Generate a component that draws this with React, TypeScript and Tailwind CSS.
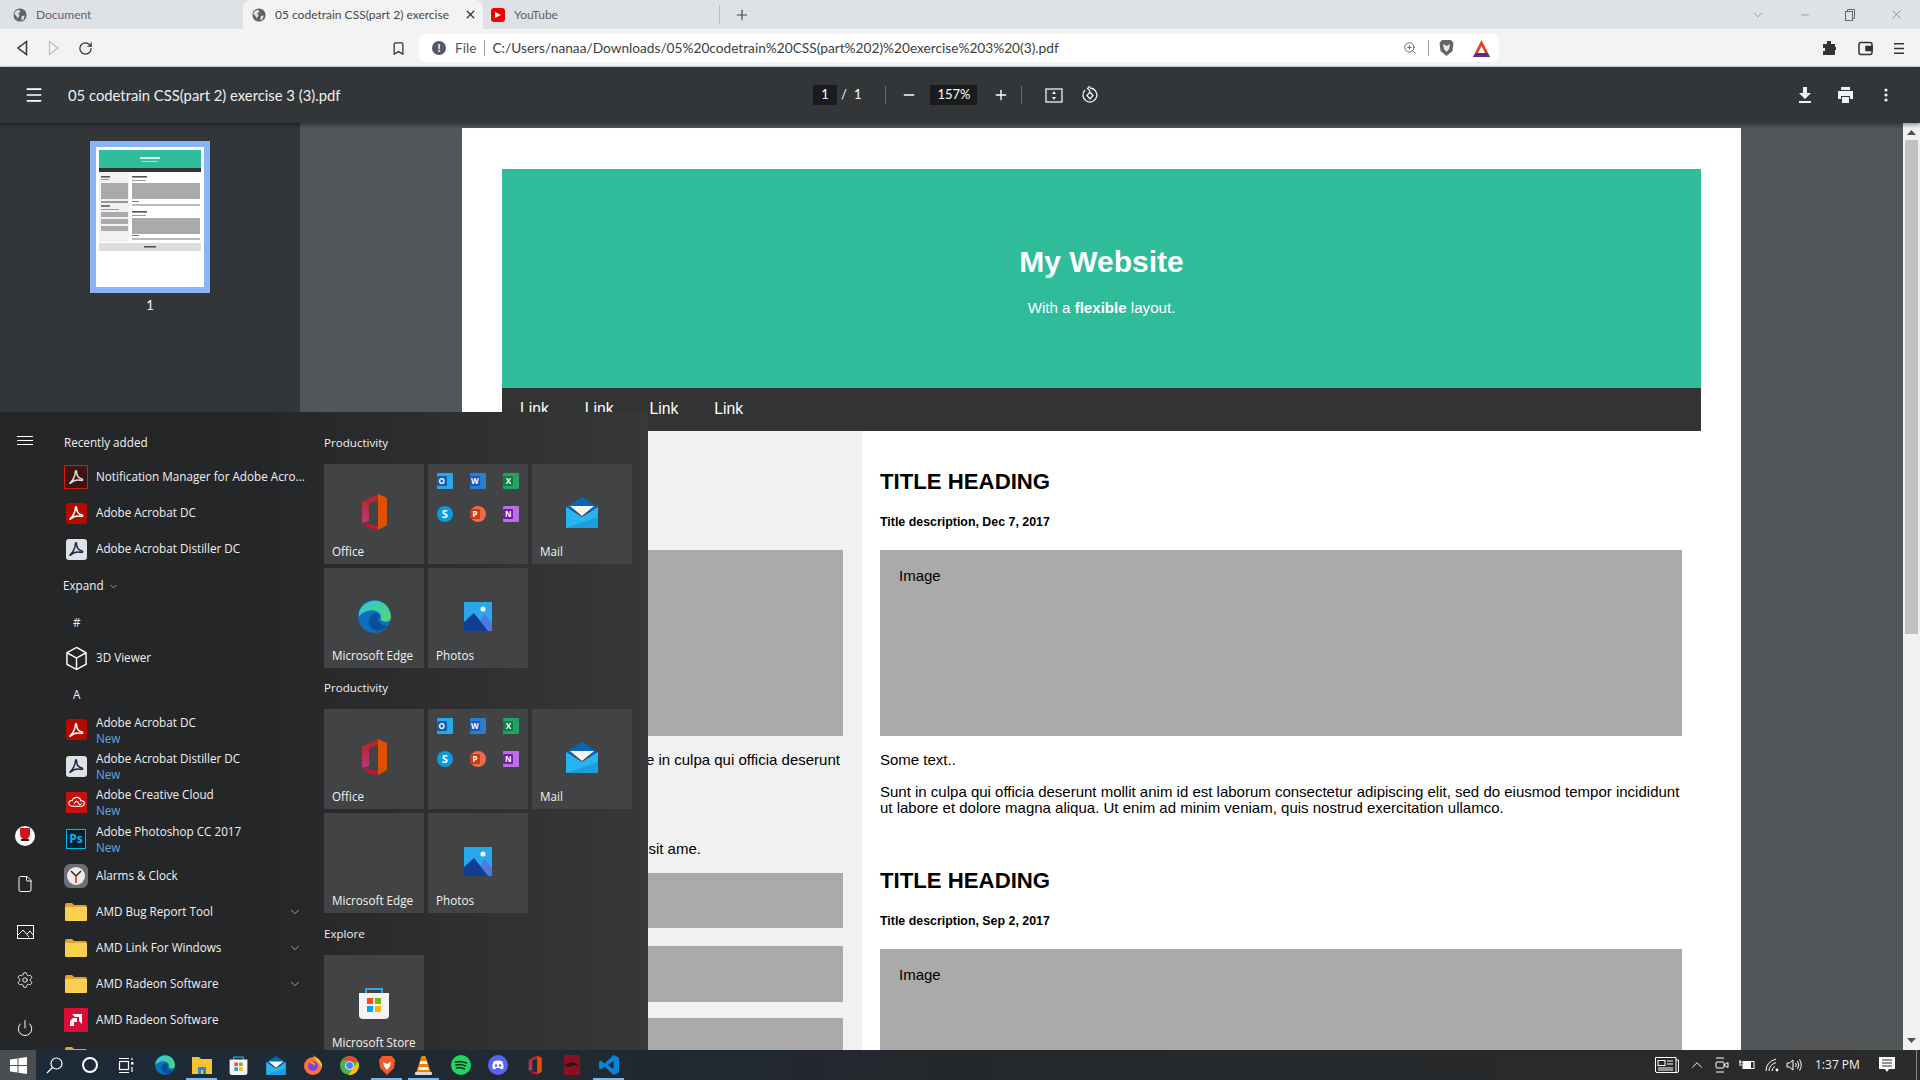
import React from "react";
import { ChevronDown, Plus, X, Minus, Menu, Bookmark, RotateCw, ZoomIn, ChevronUp, Settings, Power, File } from "lucide-react";

const SANS = "font-['Lato',sans-serif]";
const WIN = "font-['Open_Sans',sans-serif]";
const ARIAL = "font-['Liberation_Sans',Arial,sans-serif]";

const Globe = () => (
  <svg width="14" height="14" viewBox="0 0 16 16">
    <circle cx="8" cy="8" r="7.5" fill="#5f6368" />
    <path d="M3 3.5 L7 2 L8.5 4.5 L6 6 L7.5 8 L5.5 12 L3.5 8.5 L1.5 7 Z M10 9 L13.5 8.5 L12 13 L9.5 14 Z" fill="#dee1e6" />
  </svg>
);

const AcrobatGlyph = ({ color = "#fff" }: { color?: string }) => (
  <svg width="16" height="16" viewBox="0 0 24 24" fill="none" stroke={color} strokeWidth="2.2">
    <path d="M3 21 C7 18 11 10 11 5 C11 2 13 2 13 5 C13 10 16 14 21 15 C23 16 22 17.5 19 17 C14 16 8 17 4 21 C3 22 2.5 21.5 3 21 Z" />
  </svg>
);

const Folder = () => (
  <svg width="24" height="20" viewBox="0 0 24 20">
    <path d="M1 3 Q1 1 3 1 H8 L10 3 H21 Q23 3 23 5 V7 H1 Z" fill="#e0a526" />
    <path d="M1 5 H22 Q23 5 23 6 V18 Q23 19 22 19 H2 Q1 19 1 18 Z" fill="#fbcf4f" />
  </svg>
);

const AppIcon = ({ kind }: { kind: string }) => {
  if (kind === "notify")
    return (
      <span className="w-6 h-6 flex items-center justify-center border-[1.5px] border-[#d81e06] bg-[#3a1512]">
        <AcrobatGlyph color="#e8d8d8" />
      </span>
    );
  if (kind === "acrobat")
    return (
      <span className="w-[21px] h-[21px] rounded-[3px] flex items-center justify-center bg-[#b30b00]">
        <AcrobatGlyph />
      </span>
    );
  if (kind === "distiller")
    return (
      <span className="w-[21px] h-[21px] rounded-[3px] flex items-center justify-center bg-[#dfe1e6]">
        <AcrobatGlyph color="#1e2a44" />
      </span>
    );
  if (kind === "cube")
    return (
      <svg width="23" height="25" viewBox="0 0 24 26" fill="none" stroke="#fff" strokeWidth="1.5">
        <path d="M12 1.5 L22 7 V19 L12 24.5 L2 19 V7 Z M2 7 L12 12.5 L22 7 M12 12.5 V24.5" />
      </svg>
    );
  if (kind === "cc")
    return (
      <span className="w-[21px] h-[21px] flex items-center justify-center bg-[#c5110f]">
        <svg width="17" height="12" viewBox="0 0 24 16" fill="none" stroke="#fff" strokeWidth="1.6">
          <path d="M7 14 C-1 14 0 5 6 6 C8 0 17 0 18 6 C25 6 25 14 17 14 Z M9 10 C11 6 13 6 15 10 C16 12 18 12 19 10" />
        </svg>
      </span>
    );
  if (kind === "ps")
    return (
      <span className={`w-[20px] h-[20px] flex items-center justify-center border border-[#00b7f0] bg-[#00202e] text-[#00b7f0] text-[12px] font-bold ${WIN}`}>
        Ps
      </span>
    );
  if (kind === "clock")
    return (
      <span className="w-6 h-6 rounded-md bg-[#6d6f73] flex items-center justify-center">
        <svg width="20" height="20" viewBox="0 0 20 20">
          <circle cx="10" cy="10" r="9" fill="#ececec" />
          <path d="M10 10 L5 5 M10 10 L15 5" stroke="#333" strokeWidth="1.6" />
          <path d="M10 10 V17" stroke="#d9391e" strokeWidth="1.6" />
        </svg>
      </span>
    );
  if (kind === "folder") return <Folder />;
  if (kind === "amd")
    return (
      <span className="w-6 h-6 flex items-center justify-center bg-[#dc0a35]">
        <svg width="14" height="14" viewBox="0 0 14 14" fill="#fff">
          <path d="M3 1 H13 V11 L10 8 V4 H6 Z M1 13 V8 L4 5 H8 V9 H5 V13 Z" />
        </svg>
      </span>
    );
  return null;
};

const recent = [
  { kind: "notify", name: "Notification Manager for Adobe Acro..." },
  { kind: "acrobat", name: "Adobe Acrobat DC" },
  { kind: "distiller", name: "Adobe Acrobat Distiller DC" },
];

const newApps = [
  { kind: "acrobat", name: "Adobe Acrobat DC", h: "h-[37px]" },
  { kind: "distiller", name: "Adobe Acrobat Distiller DC", h: "h-[36px]" },
  { kind: "cc", name: "Adobe Creative Cloud", h: "h-[36px]" },
  { kind: "ps", name: "Adobe Photoshop CC 2017", h: "h-[38px]" },
];

const lower = [
  { kind: "clock", name: "Alarms & Clock" },
  { kind: "folder", name: "AMD Bug Report Tool", more: true },
  { kind: "folder", name: "AMD Link For Windows", more: true },
  { kind: "folder", name: "AMD Radeon Software", more: true },
  { kind: "amd", name: "AMD Radeon Software" },
  { kind: "folder", name: "" },
];

const AppRow = ({ kind, name, more }: { kind: string; name: string; more?: boolean }) => (
  <div className="h-9 flex items-center shrink-0">
    <span className="w-7 flex justify-center shrink-0">
      <AppIcon kind={kind} />
    </span>
    <span className="ml-[6px] flex-1 whitespace-nowrap text-[11.7px] text-[#f1f1f1]">{name}</span>
    {more && <ChevronDown size={14} strokeWidth={1.2} className="text-[#cfcfcf]" />}
  </div>
);

const OfficeIcon = ({ size = 38 }: { size?: number }) => (
  <svg width={size} height={size} viewBox="0 0 32 38">
    <defs>
      <linearGradient id="officeA" x1="0" y1="0" x2="0" y2="1">
        <stop offset="0" stopColor="#b5241c" />
        <stop offset="1" stopColor="#b73a78" />
      </linearGradient>
    </defs>
    <path d="M20 1 L29 5 V32 L20 37 Z" fill="#e04e00" />
    <path d="M4 9 L20 1 V7 L11 10 V28 L4 30 Z" fill="url(#officeA)" />
    <path d="M4 30 L20 33 V37 L11 35 Z" fill="#d01030" />
  </svg>
);

const EdgeIcon = ({ size = 33 }: { size?: number }) => (
  <svg width={size} height={size} viewBox="0 0 32 32">
    <defs>
      <linearGradient id="edgeA" x1="0" y1="0" x2="1" y2="1">
        <stop offset="0" stopColor="#2fc6d8" />
        <stop offset="1" stopColor="#53d76b" />
      </linearGradient>
    </defs>
    <circle cx="16" cy="16" r="16" fill="#0c6fc0" />
    <path d="M1 12 C4 2 14 0 20 1 C28 3 32 10 32 17 C32 22 24 22 22 19 C24 13 18 9 12 10 C7 11 3 13 1 16 Z" fill="url(#edgeA)" />
    <path d="M12 26 C8 20 12 13 17 13 C20 13 21 15 20 17 C18 20 22 25 28 25 C24 31 16 32 12 26 Z" fill="#0a4f97" />
  </svg>
);

const MailIcon = ({ w = 32, h = 31 }: { w?: number; h?: number }) => (
  <svg width={w} height={h} viewBox="0 0 32 31">
    <path d="M0 10 L16 0 L32 10 V14 H0 Z" fill="#0a64b4" />
    <path d="M4 9 H28 L16 19 Z" fill="#f4f4f4" />
    <path d="M0 10 L16 20 L32 10 V31 H0 Z" fill="#28b4ee" />
    <path d="M0 31 L32 20 V31 Z" fill="#1793d5" opacity="0.7" />
  </svg>
);

const PhotosIcon = () => (
  <svg width="28" height="29" viewBox="0 0 28 29">
    <rect width="28" height="29" fill="#28a8ea" />
    <circle cx="19" cy="7" r="2.6" fill="#e8f4fc" />
    <path d="M12 29 L20 12 L28 21 V29 Z" fill="#4f78e0" />
    <path d="M0 29 V20 L10 11 L24 29 Z" fill="#103f91" />
  </svg>
);

const StoreIcon = ({ size = 32 }: { size?: number }) => (
  <svg width={size} height={size} viewBox="0 0 32 32">
    <path d="M8 7 V2 H24 V7" fill="none" stroke="#28a8ea" strokeWidth="2" />
    <path d="M1 6 H31 V28 Q31 32 27 32 H5 Q1 32 1 28 Z" fill="#f4f4f4" />
    <rect x="9" y="11" width="6" height="6" fill="#f25022" />
    <rect x="17" y="11" width="6" height="6" fill="#7fba00" />
    <rect x="9" y="19" width="6" height="6" fill="#00a4ef" />
    <rect x="17" y="19" width="6" height="6" fill="#ffb900" />
  </svg>
);

const miniApps = [
  { l: "O", page: "bg-[#28a8ea]", box: "top-[3px] w-[10px] h-[10px] bg-[#0f5fb0] text-[8px]", round: false },
  { l: "W", page: "bg-[#2b7cd3]", box: "top-[3px] w-[10px] h-[10px] bg-[#185abd] text-[8px]", round: false },
  { l: "X", page: "bg-[#21a366]", box: "top-[3px] w-[10px] h-[10px] bg-[#107c41] text-[8px]", round: false },
  { l: "S", page: "bg-[#0a9be0]", box: "top-0 w-4 h-4 text-[11px]", round: true },
  { l: "P", page: "bg-[#ed6c47]", box: "top-[3px] w-[10px] h-[10px] bg-[#c43e1c] text-[8px]", round: true },
  { l: "N", page: "bg-[#ba6ee0]", box: "top-[3px] w-[10px] h-[10px] bg-[#7719aa] text-[8px]", round: false },
];

const Tile = ({ label, children }: { label?: string; children?: React.ReactNode }) => (
  <div className="relative w-[100px] h-[100px] bg-[#424344] flex items-center justify-center shrink-0">
    {children}
    {label && (
      <span className="absolute left-2 bottom-[3px] text-[11.7px] text-[#f3f3f3] whitespace-nowrap">{label}</span>
    )}
  </div>
);

const MiniTile = () => (
  <div className="w-[100px] h-[100px] bg-[#424344] shrink-0 grid grid-cols-3 grid-rows-[33px_33px]">
    {miniApps.map((a) => (
      <span key={a.l} className="flex items-center justify-center">
        <span className={`relative w-4 h-4 ${a.page} ${a.round ? "rounded-full" : "rounded-[1px]"}`}>
          <span className={`absolute left-0 ${a.box} text-white font-bold leading-none flex items-center justify-center rounded-[1px]`}>
            {a.l}
          </span>
        </span>
      </span>
    ))}
  </div>
);

const Productivity = ({ edgeIcon }: { edgeIcon: boolean }) => (
  <>
    <div className="h-[34px] shrink-0 flex items-center text-[11.6px] text-[#f1f1f1]">Productivity</div>
    <div className="grid grid-cols-[100px_100px_100px] gap-1 mt-1 shrink-0">
      <Tile label="Office">
        <span className="-mt-1">
          <OfficeIcon />
        </span>
      </Tile>
      <MiniTile />
      <Tile label="Mail">
        <span className="-mt-1">
          <MailIcon />
        </span>
      </Tile>
      <Tile label="Microsoft Edge">
        {edgeIcon && (
          <span className="-mt-1">
            <EdgeIcon />
          </span>
        )}
      </Tile>
      <Tile label="Photos">
        <span className="-mt-1">
          <PhotosIcon />
        </span>
      </Tile>
    </div>
  </>
);

const RailSlot = ({ children }: { children: React.ReactNode }) => (
  <span className="h-[18px] flex items-center justify-center">{children}</span>
);

const StartMenu = () => (
  <div className={`absolute left-0 top-[412px] bottom-[30px] w-[648px] overflow-hidden flex bg-linear-to-r from-[#252628] from-40% to-[#383838] ${WIN}`}>
    <div className="w-[50px] shrink-0 flex flex-col items-center pt-6 pb-[13px]">
      <svg width="16" height="9" viewBox="0 0 16 9" stroke="#fff" strokeWidth="1">
        <path d="M0 0.5 H16 M0 4.5 H16 M0 8.5 H16" />
      </svg>
      <div className="mt-auto flex flex-col items-center gap-[30px]">
        <RailSlot>
          <span className="w-5 h-5 shrink-0 rounded-full bg-white flex items-start justify-center pt-[2px]">
            <svg width="12" height="13" viewBox="0 0 12 13">
              <path d="M1 0 H11 V6 Q11 10 6 12 Q1 10 1 6 Z" fill="#d3121d" />
              <rect x="2" y="11" width="8" height="2" fill="#222" />
            </svg>
          </span>
        </RailSlot>
        <RailSlot>
          <File size={18} strokeWidth={1.3} className="text-white" />
        </RailSlot>
        <RailSlot>
          <svg width="17" height="14" viewBox="0 0 17 14" fill="none" stroke="#fff" strokeWidth="1">
            <rect x="0.5" y="0.5" width="16" height="13" />
            <path d="M1 10 L6 5 L12 12 M10 9 L13 6 L16 10" />
          </svg>
        </RailSlot>
        <RailSlot>
          <Settings size={18} strokeWidth={1.2} className="text-white" />
        </RailSlot>
        <RailSlot>
          <Power size={18} strokeWidth={1.3} className="text-white" />
        </RailSlot>
      </div>
    </div>

    <div className="w-[240px] shrink-0 ml-3 flex flex-col pt-[15px] text-[#f1f1f1]">
      <div className="h-8 shrink-0 flex items-center pl-[2px] text-[11.7px]">Recently added</div>
      {recent.map((r) => (
        <AppRow key={r.name} {...r} />
      ))}
      <div className="h-[38px] shrink-0 flex items-center gap-1 pl-[1px] text-[11.7px]">
        Expand <ChevronDown size={11} strokeWidth={1.2} />
      </div>
      <div className="h-[35px] shrink-0 flex items-center pl-[11px] text-[11.7px]">#</div>
      <AppRow kind="cube" name="3D Viewer" />
      <div className="h-[35px] shrink-0 flex items-center pl-[11px] pt-[2px] text-[11.7px]">A</div>
      {newApps.map((a) => (
        <div key={a.name} className={`${a.h} flex items-center shrink-0`}>
          <span className="w-7 flex justify-center shrink-0">
            <AppIcon kind={a.kind} />
          </span>
          <span className="ml-[6px] flex flex-col text-[11.7px] leading-[16px] whitespace-nowrap">
            {a.name}
            <span className="text-[#5fa8e0]">New</span>
          </span>
        </div>
      ))}
      {lower.map((r, i) => (
        <AppRow key={i} {...r} />
      ))}
    </div>

    <div className="ml-[22px] flex flex-col pt-[14px]">
      <Productivity edgeIcon />
      <div className="mt-[3px] flex flex-col shrink-0">
        <Productivity edgeIcon={false} />
      </div>
      <div className="h-[34px] mt-1 shrink-0 flex items-center text-[11.6px] text-[#f1f1f1]">Explore</div>
      <div className="mt-1 shrink-0">
        <Tile label="Microsoft Store">
          <span className="-mt-1">
            <StoreIcon />
          </span>
        </Tile>
      </div>
    </div>
  </div>
);

const taskbarIcons: { key: string; node: React.ReactNode; running?: boolean }[] = [
  { key: "edge", node: <EdgeIcon size={20} /> },
  {
    key: "files",
    running: true,
    node: (
      <svg width="22" height="19" viewBox="0 0 22 19">
        <path d="M1 1 H8 L10 3 H21 V18 H1 Z" fill="#f4c430" />
        <path d="M7 18 V11 H15 V18 H12 V14 H10 V18 Z" fill="#2b88d8" />
      </svg>
    ),
  },
  { key: "store", node: <StoreIcon size={19} /> },
  { key: "mail", node: <MailIcon w={20} h={19} /> },
  {
    key: "firefox",
    node: (
      <svg width="20" height="20" viewBox="0 0 20 20">
        <circle cx="10" cy="11" r="9" fill="#ff7139" />
        <path d="M10 0 C14 3 19 6 19 11 C19 15 17 8 14 7 Z" fill="#ffbd2e" />
        <circle cx="10" cy="11" r="5" fill="#7542e5" />
        <path d="M6 7 C9 5 13 8 12 11 C10 9 8 9 6 7 Z" fill="#ff9a3c" />
      </svg>
    ),
  },
  {
    key: "chrome",
    node: (
      <svg width="19" height="19" viewBox="0 0 20 20">
        <circle cx="10" cy="10" r="10" fill="#4caf50" />
        <path d="M10 0 A10 10 0 0 1 19 6 H10 L3 3.5 A10 10 0 0 1 10 0 Z" fill="#ea4335" />
        <path d="M19 6 A10 10 0 0 1 9 20 L14 12 Z" fill="#fbbc05" />
        <circle cx="10" cy="10" r="4.6" fill="#fff" />
        <circle cx="10" cy="10" r="3.6" fill="#4285f4" />
      </svg>
    ),
  },
  {
    key: "brave",
    running: true,
    node: (
      <svg width="18" height="21" viewBox="0 0 18 21">
        <path d="M4 1 H14 L17 5 L16 13 L9 20 L2 13 L1 5 Z" fill="#f25a29" />
        <path d="M5 7 L9 9 L13 7 L12 11 L9 15 L6 11 Z" fill="#fff" />
      </svg>
    ),
  },
  {
    key: "vlc",
    running: true,
    node: (
      <svg width="19" height="21" viewBox="0 0 19 21">
        <path d="M7.5 1 H11.5 L17 18 H2 Z" fill="#f08000" />
        <path d="M6.5 6 H12.5 L13.5 9 H5.5 Z M5 12 H14 L15 15 H4 Z" fill="#f4f4f4" />
        <rect x="1" y="17" width="17" height="3" rx="1" fill="#d9d9d9" />
      </svg>
    ),
  },
  {
    key: "spotify",
    node: (
      <svg width="20" height="20" viewBox="0 0 20 20" fill="none">
        <circle cx="10" cy="10" r="10" fill="#1ed760" />
        <path d="M4.5 7 C8 6 12 6.3 15.5 8 M5 10 C8 9.2 11.5 9.5 14.5 11 M5.5 13 C8 12.4 11 12.6 13.5 14" stroke="#14281a" strokeWidth="1.5" strokeLinecap="round" />
      </svg>
    ),
  },
  {
    key: "discord",
    node: (
      <svg width="20" height="20" viewBox="0 0 20 20">
        <circle cx="10" cy="10" r="10" fill="#5865f2" />
        <path d="M5.5 6.5 Q10 4.5 14.5 6.5 Q16 10 15.5 13.5 L13 14.5 L12 13 H8 L7 14.5 L4.5 13.5 Q4 10 5.5 6.5 Z" fill="#fff" />
        <circle cx="8" cy="10.5" r="1.3" fill="#5865f2" />
        <circle cx="12" cy="10.5" r="1.3" fill="#5865f2" />
      </svg>
    ),
  },
  { key: "office", node: <OfficeIcon size={20} /> },
  {
    key: "red",
    node: (
      <span className="w-4 h-5 flex items-center justify-center bg-[#8f0f22]">
        <svg width="16" height="8" viewBox="0 0 16 8">
          <path d="M0 4 Q6 0 11 2 L16 6 L10 4 L4 6 Z" fill="#1a1a1a" />
        </svg>
      </span>
    ),
  },
  {
    key: "vscode",
    running: true,
    node: (
      <svg width="20" height="20" viewBox="0 0 20 20">
        <path d="M14.5 0 L20 2.5 V17.5 L14.5 20 L5.5 11.5 L2 14.5 L0 13.5 V6.5 L2 5.5 L5.5 8.5 Z M14.5 6 L9 10 L14.5 14 Z" fill="#0a84d6" />
      </svg>
    ),
  },
];

const Taskbar = () => (
  <div className="h-[30px] shrink-0 flex items-stretch text-white bg-linear-to-r from-[#1c2b38] via-[#23282c] to-[#2b2b2b]">
    <div className="w-9 flex items-center justify-center bg-[#4b4e50]">
      <svg width="17" height="17" viewBox="0 0 17 17" fill="#fff">
        <path d="M0 2.5 L7.5 1.4 V8 H0 Z M8.5 1.2 L17 0 V8 H8.5 Z M0 9 H7.5 V15.6 L0 14.5 Z M8.5 9 H17 V17 L8.5 15.8 Z" />
      </svg>
    </div>
    <div className="w-9 flex items-center justify-center">
      <svg width="17" height="17" viewBox="0 0 17 17" fill="none" stroke="#fff" strokeWidth="1.2">
        <circle cx="10.5" cy="6.5" r="5.5" />
        <path d="M6.5 10.5 L1 16" />
      </svg>
    </div>
    <div className="w-9 flex items-center justify-center">
      <span className="w-4 h-4 rounded-full border-2 border-white" />
    </div>
    <div className="w-9 flex items-center justify-center">
      <svg width="16" height="17" viewBox="0 0 16 17" fill="none" stroke="#fff" strokeWidth="1.2">
        <rect x="1.5" y="4.5" width="9" height="8" />
        <path d="M1 1.5 H11 M1 15.5 H11" />
        <rect x="13" y="5" width="2.5" height="2.5" fill="#fff" stroke="none" />
        <path d="M14 1 V3 M14 10 V15" />
      </svg>
    </div>
    <div className="ml-[2px] flex">
      {taskbarIcons.map((t) => (
        <div key={t.key} className="relative w-[37px] flex items-center justify-center">
          {t.node}
          {t.running && <span className="absolute left-[3px] right-[3px] bottom-0 h-[2px] bg-[#76b9ed]" />}
        </div>
      ))}
    </div>

    <div className={`ml-auto flex items-center ${WIN}`}>
      <svg width="24" height="16" viewBox="0 0 24 16" fill="none" stroke="#fff" strokeWidth="1">
        <path d="M0.5 0.5 H21 V15.5 H2 Q0.5 15.5 0.5 14 Z M21 3 H23.5 V14 Q23.5 15.5 22 15.5 H21" />
        <rect x="3" y="3.5" width="7" height="5" />
        <path d="M12 4 H18 M12 7 H18 M3 11 H18 M3 13 H18" />
      </svg>
      <ChevronUp size={18} strokeWidth={1.2} className="ml-[9px]" />
      <svg className="ml-[9px]" width="14" height="16" viewBox="0 0 14 16" fill="none" stroke="#fff" strokeWidth="1">
        <path d="M1 1 H9 M1 15 H9" />
        <rect x="1" y="5" width="8" height="6" rx="1" />
        <path d="M9 8 L13 5.5 V10.5 Z" />
      </svg>
      <svg className="ml-[10px]" width="16" height="12" viewBox="0 0 16 12" fill="none" stroke="#fff" strokeWidth="1">
        <rect x="4" y="2.5" width="11" height="7" />
        <rect x="4" y="3" width="8" height="6" fill="#fff" stroke="none" />
        <path d="M0 3 H3 M0 6 H3 M1 1 V5" />
      </svg>
      <svg className="ml-[10px]" width="14" height="14" viewBox="0 0 14 14" fill="none" stroke="#fff" strokeWidth="1">
        <path d="M1 13 Q1 4 11 1 M4 13 Q4 7 11 4.5 M7 13 Q7 10 10 8.5" />
        <circle cx="12" cy="12" r="1.4" fill="#fff" stroke="none" />
      </svg>
      <svg className="ml-[7px]" width="16" height="14" viewBox="0 0 16 14" fill="none" stroke="#fff" strokeWidth="1">
        <path d="M1 5 H3.5 L7 2 V12 L3.5 9 H1 Z M9.5 5 Q11 7 9.5 9 M11.5 3 Q14 7 11.5 11 M13.5 1.5 Q17 7 13.5 12.5" />
      </svg>
      <span className="ml-[13px] w-[44px] text-center text-[12px] text-[#f0f0f0] whitespace-nowrap">1:37 PM</span>
      <svg className="ml-5" width="16" height="16" viewBox="0 0 16 16">
        <path d="M0 0 H16 V12 H10 L8 15 L6 12 H0 Z" fill="#fff" />
        <path d="M3 3 H13 M3 6 H13 M3 9 H13" stroke="#2b2b2b" strokeWidth="1" />
      </svg>
      <span className="ml-[21px] w-[4px] h-full border-l border-[#888]" />
    </div>
  </div>
);

const ChromeBar = () => (
  <>
    <div className={`h-[29px] shrink-0 flex items-stretch bg-[#dee1e6] text-[12px] text-[#5f6368] ${SANS}`}>
      <div className="w-[243px] flex items-center gap-[9px] pl-[13px]">
        <Globe /> Document
      </div>
      <div className="w-[240px] flex items-center bg-[#f3f3f3] rounded-t-lg pl-[9px] text-[#45484c]">
        <Globe />
        <span className="ml-[9px] w-[180px] whitespace-nowrap">05 codetrain CSS(part 2) exercise</span>
        <X size={13} strokeWidth={2.4} className="ml-[9px] text-[#333]" />
      </div>
      <div className="w-[237px] flex items-center pl-[8px] border-r border-[#b9bcc1] my-[5px]">
        <span className="w-[14px] h-[14px] rounded-[3px] bg-[#f00000] flex items-center justify-center">
          <svg width="6" height="6" viewBox="0 0 6 6" fill="#fff">
            <path d="M0 0 L6 3 L0 6 Z" />
          </svg>
        </span>
        <span className="ml-[9px]">YouTube</span>
      </div>
      <div className="flex items-center pl-[14px]">
        <Plus size={16} strokeWidth={1.8} className="text-[#45484c]" />
      </div>
      <div className="ml-auto flex items-center pr-[16px] text-[#666]">
        <ChevronDown size={14} strokeWidth={1} />
        <Minus size={12} strokeWidth={1} className="ml-[34px]" />
        <svg className="ml-[34px]" width="10" height="12" viewBox="0 0 10 12" fill="none" stroke="currentColor" strokeWidth="1">
          <rect x="0.5" y="2.5" width="7" height="9" />
          <path d="M2.5 2.5 V0.5 H9.5 V9.5 H7.5" />
        </svg>
        <X size={15} strokeWidth={1} className="ml-[34px]" />
      </div>
    </div>
    <div className={`h-[38px] shrink-0 flex items-center pt-[1px] bg-[#f3f3f3] border-b border-[#d0d0d0] text-[#45484c] ${SANS}`}>
      <svg className="ml-[16px]" width="12" height="16" viewBox="0 0 12 16" fill="none" stroke="#333" strokeWidth="1.5">
        <path d="M10.5 1.5 L2 8 L10.5 14.5 Z" />
      </svg>
      <svg className="ml-[20px]" width="12" height="16" viewBox="0 0 12 16" fill="none" stroke="#b8b8b8" strokeWidth="1.2">
        <path d="M1.5 1.5 L10 8 L1.5 14.5 Z" />
      </svg>
      <RotateCw size={15} strokeWidth={2} className="ml-[18px] text-[#333]" />
      <Bookmark size={15} strokeWidth={2} className="ml-[298px] text-[#333]" />
      <div className="ml-[13px] w-[1080px] h-[28px] rounded-md bg-white flex items-center text-[13.7px]">
        <span className="ml-[13px] w-[14px] h-[14px] rounded-full bg-[#55585c] text-white text-[11px] font-bold flex items-center justify-center">!</span>
        <span className="ml-[9px] text-[#55585c]">File</span>
        <span className="ml-[8px] w-px h-4 bg-[#9a9a9a]" />
        <span className="ml-[7px] text-[#3c4043] whitespace-nowrap">C:/Users/nanaa/Downloads/05%20codetrain%20CSS(part%202)%20exercise%203%20(3).pdf</span>
        <ZoomIn size={14} strokeWidth={1.5} className="ml-auto text-[#555]" />
        <span className="ml-[11px] w-px h-4 bg-[#9a9a9a]" />
        <svg className="ml-[10px]" width="15" height="18" viewBox="0 0 15 18">
          <path d="M3 1 H12 L14.5 4 L13.5 12 L7.5 17 L1.5 12 L0.5 4 Z" fill="#666" />
          <path d="M4 5 L7.5 7 L11 5 L10 10 L7.5 13 L5 10 Z" fill="#e8e8e8" />
        </svg>
        <svg className="ml-[19px] mr-[9px]" width="17" height="17" viewBox="0 0 17 17">
          <path d="M8.5 0 L17 17 H0 Z" fill="#e2401a" />
          <path d="M2.5 13 L14.5 13 L17 17 H0 Z" fill="#5a2c91" />
          <path d="M8.5 6 L12 13 H5 Z" fill="#fff" />
        </svg>
      </div>
      <svg className="ml-[323px]" width="14" height="15" viewBox="0 0 14 15" fill="#333">
        <path d="M5 0 H9 V3 H13 V6 H14 V9 H13 V14 H1 V10 H3 V7 H1 V3 H5 Z" />
      </svg>
      <svg className="ml-[22px]" width="15" height="15" viewBox="0 0 15 15" fill="none" stroke="#333" strokeWidth="1.5">
        <rect x="1" y="1.5" width="13" height="12" rx="2" />
        <rect x="8" y="5.5" width="6" height="4" fill="#333" />
      </svg>
      <svg className="ml-[20px]" width="12" height="13" viewBox="0 0 12 13" fill="#333">
        <path d="M1 1 H11 V2.5 H1 Z M1 5.7 H11 V7.2 H1 Z M1 10.5 H11 V12 H1 Z" />
      </svg>
    </div>
  </>
);

const PdfToolbar = () => (
  <div className={`h-[56px] shrink-0 relative z-10 flex items-center bg-[#323639] text-white shadow-[0_2px_4px_rgba(0,0,0,0.4)] ${SANS}`}>
    <Menu size={20} strokeWidth={2} className="ml-[24px]" />
    <span className="ml-6 w-[360px] whitespace-nowrap text-[14.8px] text-[#f1f1f1]">05 codetrain CSS(part 2) exercise 3 (3).pdf</span>
    <span className="ml-[385px] w-[24px] h-[20px] bg-[#191b1c] text-[13px] flex items-center justify-center">1</span>
    <span className="ml-[4px] text-[13px]">/</span>
    <span className="ml-[7px] text-[13px]">1</span>
    <span className="ml-[24px] w-px h-[18px] bg-[#6a6d70]" />
    <Minus size={16} strokeWidth={2} className="ml-[15px]" />
    <span className="ml-[13px] w-[47px] h-[20px] bg-[#191b1c] text-[13px] flex items-center justify-center">157%</span>
    <Plus size={16} strokeWidth={2} className="ml-4" />
    <span className="ml-3 w-px h-[18px] bg-[#6a6d70]" />
    <svg className="ml-[23px]" width="18" height="15" viewBox="0 0 18 15" fill="none" stroke="#f1f1f1" strokeWidth="1.3">
      <rect x="1" y="1" width="16" height="13" />
      <path d="M9 3 L11 6 H7 Z M9 12 L11 9 H7 Z" fill="#f1f1f1" stroke="none" />
    </svg>
    <svg className="ml-[18px]" width="18" height="18" viewBox="0 0 18 18" fill="none" stroke="#f1f1f1" strokeWidth="1.3">
      <path d="M9 2 A7 7 0 1 1 4 4" />
      <path d="M9 6 L12 9.5 L9 13 L6 9.5 Z" />
      <path d="M9 0 L6.5 2.5 L9 5" />
    </svg>
    <div className="ml-auto flex items-center pr-8">
      <svg width="14" height="16" viewBox="0 0 14 16" fill="#f1f1f1">
        <path d="M5 0 H9 V6 H13 L7 12 L1 6 H5 Z M1 14 H13 V16 H1 Z" />
      </svg>
      <svg className="ml-[25px]" width="17" height="16" viewBox="0 0 17 16" fill="#f1f1f1">
        <path d="M4 0 H13 V3 H4 Z M1 4 H16 V12 H13 V9 H4 V12 H1 Z M5 10 H12 V16 H5 Z" />
      </svg>
      <svg className="ml-[30px]" width="4" height="14" viewBox="0 0 4 14" fill="#f1f1f1">
        <circle cx="2" cy="2" r="1.6" />
        <circle cx="2" cy="7" r="1.6" />
        <circle cx="2" cy="12" r="1.6" />
      </svg>
    </div>
  </div>
);

const Thumbnail = () => (
  <div className="mt-[18px] ml-[90px] w-[120px] border-[6px] border-[#8ab4f8]">
    <svg className="block" width="108" height="140" viewBox="0 0 108 140">
      <rect width="108" height="140" fill="#fff" />
      <rect x="3" y="3" width="102" height="18" fill="#2fbc9b" />
      <rect x="44" y="10" width="20" height="2" fill="#d6f3ea" />
      <rect x="46" y="14" width="16" height="1" fill="#a6e4d4" />
      <rect x="3" y="21" width="102" height="4" fill="#333" />
      <rect x="3" y="25" width="30" height="70" fill="#f1f1f1" />
      <rect x="5" y="29" width="9" height="1.6" fill="#555" />
      <rect x="5" y="32" width="8" height="1" fill="#999" />
      <rect x="5" y="36" width="27" height="16" fill="#aaa" />
      <rect x="5" y="54" width="27" height="2" fill="#999" />
      <rect x="5" y="58" width="9" height="2" fill="#777" />
      <rect x="5" y="62" width="18" height="1" fill="#999" />
      <rect x="5" y="65" width="27" height="5" fill="#aaa" />
      <rect x="5" y="72" width="27" height="5" fill="#aaa" />
      <rect x="5" y="79" width="27" height="5" fill="#aaa" />
      <rect x="36" y="29" width="15" height="1.6" fill="#555" />
      <rect x="36" y="33" width="14" height="1" fill="#999" />
      <rect x="36" y="36" width="68" height="16" fill="#aaa" />
      <rect x="36" y="54" width="7" height="1" fill="#777" />
      <rect x="36" y="57" width="68" height="2" fill="#bbb" />
      <rect x="36" y="64" width="15" height="1.6" fill="#555" />
      <rect x="36" y="68" width="14" height="1" fill="#999" />
      <rect x="36" y="71" width="68" height="16" fill="#aaa" />
      <rect x="36" y="88" width="7" height="1" fill="#777" />
      <rect x="36" y="91" width="68" height="2" fill="#bbb" />
      <rect x="3" y="96" width="102" height="8" fill="#ddd" />
      <rect x="48" y="99" width="12" height="1.6" fill="#555" />
    </svg>
  </div>
);

const Pdf = () => (
  <div className={`ml-[162px] mt-[5px] w-[1279px] h-[1400px] shrink-0 bg-white px-[40px] pt-[41px] text-black ${ARIAL}`}>
    <div className="h-[219px] bg-[#2fbc9b] text-white flex flex-col items-center">
      <div className="mt-[76px] text-[30px] leading-[34px] font-bold">My Website</div>
      <div className="mt-[20px] text-[15.1px] leading-[18px]">
        With a <b>flexible</b> layout.
      </div>
    </div>
    <div className="h-[43px] pb-[2px] bg-[#333] text-white text-[15.7px] flex items-center pl-[18px] gap-[36px]">
      <span>Link</span>
      <span>Link</span>
      <span>Link</span>
      <span>Link</span>
    </div>
    <div className="flex">
      <div className="w-[360px] h-[800px] bg-[#f1f1f1] pl-[18px] pr-[19px] pt-[37px]">
        <div className="text-[22.2px] leading-[27px] font-bold">About Me</div>
        <div className="mt-[19px] text-[12.4px] leading-[16px] font-bold">Photo of me:</div>
        <div className="mt-[20px] h-[186px] bg-[#aaa]" />
        <div className="mt-[15px] text-[15px] leading-[18px] whitespace-nowrap">Some text about me in culpa qui officia deserunt</div>
        <div className="mt-[71px] text-[15px] leading-[18px]">Lorem ipsum dolor sit ame.</div>
        <div className="mt-[15px] h-[55px] bg-[#aaa]" />
        <div className="mt-[18px] h-[56px] bg-[#aaa]" />
        <div className="mt-4 h-[56px] bg-[#aaa]" />
      </div>
      <div className="w-[839px] pl-[18px] pr-[19px] pt-[37px]">
        <div className="text-[22.2px] leading-[27px] font-bold">TITLE HEADING</div>
        <div className="mt-[19px] text-[12.4px] leading-[16px] font-bold">Title description, Dec 7, 2017</div>
        <div className="mt-[20px] h-[186px] bg-[#aaa] px-[19px] pt-[17px] text-[15px] leading-[18px]">Image</div>
        <div className="mt-[15px] text-[15px] leading-[18px]">Some text..</div>
        <div className="mt-[15px] text-[15px] leading-[16px]">
          Sunt in culpa qui officia deserunt mollit anim id est laborum consectetur adipiscing elit, sed do eiusmod tempor incididunt ut labore et dolore magna aliqua. Ut enim ad minim veniam, quis nostrud exercitation ullamco.
        </div>
        <div className="mt-[51px] text-[22.2px] leading-[27px] font-bold">TITLE HEADING</div>
        <div className="mt-[19px] text-[12.4px] leading-[16px] font-bold">Title description, Sep 2, 2017</div>
        <div className="mt-[20px] h-[186px] bg-[#aaa] px-[19px] pt-[17px] text-[15px] leading-[18px]">Image</div>
      </div>
    </div>
  </div>
);

export default function App() {
  return (
    <div className="relative w-[1920px] h-[1080px] overflow-hidden flex flex-col bg-[#525659]">
      <ChromeBar />
      <PdfToolbar />
      <div className="flex-1 min-h-0 flex overflow-hidden">
        <div className="w-[300px] shrink-0 bg-[#323639]">
          <Thumbnail />
          <div className={`mt-[3px] text-center text-[13px] text-white ${SANS}`}>1</div>
        </div>
        <div className="flex-1 min-w-0 overflow-hidden">
          <Pdf />
        </div>
        {/* scrollbar */}
        <div className="w-[17px] shrink-0 bg-[#f1f1f1] flex flex-col items-center text-[#505050]">
          <svg className="mt-[7px]" width="9" height="5" viewBox="0 0 9 5" fill="currentColor">
            <path d="M4.5 0 L9 5 H0 Z" />
          </svg>
          <div className="mt-[5px] w-[13px] h-[494px] shrink-0 bg-[#c1c1c1]" />
          <svg className="mt-auto mb-[7px]" width="9" height="5" viewBox="0 0 9 5" fill="currentColor">
            <path d="M0 0 H9 L4.5 5 Z" />
          </svg>
        </div>
      </div>
      <Taskbar />
      <StartMenu />
    </div>
  );
}
